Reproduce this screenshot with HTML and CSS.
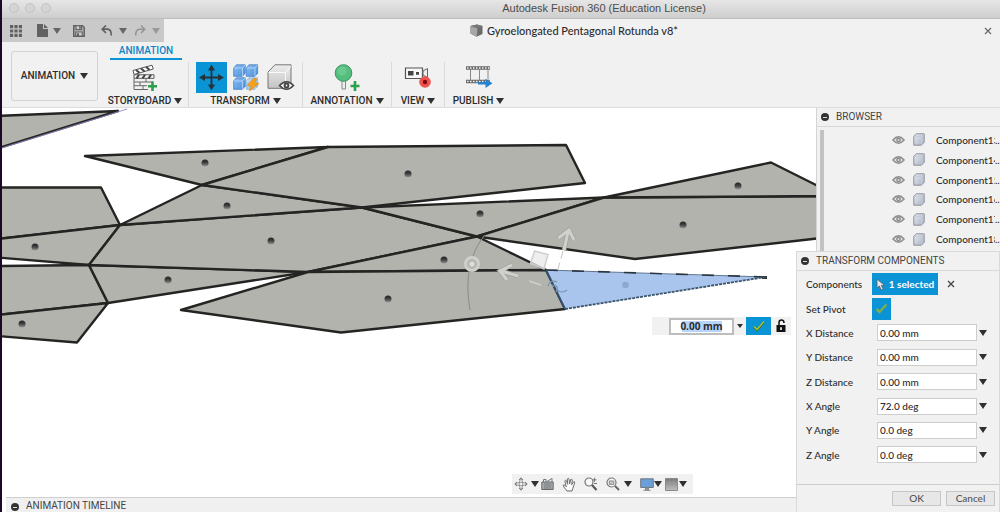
FILE: index.html
```
<!DOCTYPE html>
<html lang="en">
<head>
<meta charset="utf-8">
<title>Autodesk Fusion 360 (Education License)</title>
<link rel="stylesheet" href="styles.css">
</head>
<body>
<svg class="defs" aria-hidden="true">
  <defs>
    <linearGradient id="cubeFace" x1="0" y1="0" x2="1" y2="1"><stop offset="0" stop-color="#e6eaf1"/><stop offset="1" stop-color="#aab2c2"/></linearGradient>
    <linearGradient id="blueFace" x1="0" y1="0" x2="1" y2="1"><stop offset="0" stop-color="#8cc0f4"/><stop offset="1" stop-color="#4b8edb"/></linearGradient>
    <linearGradient id="grayFace" x1="0" y1="0" x2="0" y2="1"><stop offset="0" stop-color="#ececec"/><stop offset="1" stop-color="#c4c4c4"/></linearGradient>
    <linearGradient id="shade" x1="0" y1="0" x2="0" y2="1"><stop offset="0" stop-color="#777"/><stop offset="1" stop-color="#c0c0c0"/></linearGradient>
    <linearGradient id="node" x1="0" y1="0" x2="0" y2="1"><stop offset="0" stop-color="#222"/><stop offset="0.5" stop-color="#444"/><stop offset="1" stop-color="#999"/></linearGradient>
    <symbol id="eye" viewBox="0 0 14 10"><path d="M1 5Q7-2 13 5Q7 12 1 5Z" fill="#e2e2e2" stroke="#8c8c8c" stroke-width="1.5"/><circle cx="7" cy="5" r="2.6" fill="#8c8c8c"/><circle cx="7" cy="5" r="1" fill="#ddd"/></symbol>
    <symbol id="cube" viewBox="0 0 12 13"><path d="M.8 3.3L3.5.8H11.2V9.2L8.5 12.2H.8Z" fill="url(#cubeFace)" stroke="#8d929c"/><path d="M1 3.4H8.6V12M8.6 3.4L11 1" fill="none" stroke="#c3c8d2" stroke-width=".8"/></symbol>
    <symbol id="bluecube" viewBox="0 0 13 13"><path d="M.7 4L3.4.8H12.2V9.3L9.4 12.3H.7Z" fill="url(#blueFace)" stroke="#3f7cc0" stroke-width=".8"/><path d="M.9 4H9.4L12 1M9.4 4V12" fill="none" stroke="#b4d8fb" stroke-width=".9"/></symbol>
  </defs>
</svg>
<div class="app">
  <header class="titlebar">
    <div class="lights"><i></i><i></i><i></i></div>
    <h1>Autodesk Fusion 360 (Education License)</h1>
  </header>

  <div class="tabs">
    <div class="quick">
      <button class="ib grid" aria-label="Data panel"><svg width="12" height="12"><path d="M0 0h3.2v3.2H0zM4.4 0h3.2v3.2H4.4zM8.8 0H12v3.2H8.8zM0 4.4h3.2v3.2H0zM4.4 4.4h3.2v3.2H4.4zM8.8 4.4H12v3.2H8.8zM0 8.8h3.2V12H0zM4.4 8.8h3.2V12H4.4zM8.8 8.8H12V12H8.8z" fill="#626262"/></svg></button>
      <button class="ib file" aria-label="File"><svg width="12" height="13"><path d="M0 0H6V5H11V13H0Z" fill="#626262"/><path d="M7 0L11 4H7Z" fill="#626262"/></svg><i class="caret dim"></i></button>
      <button class="ib save" aria-label="Save"><svg width="12" height="12"><path d="M.7.7H9.5L11.3 2.5V11.3H.7Z" fill="#aaa" stroke="#626262" stroke-width="1.4"/><path d="M3 .8H8.5V4.5H3ZM2.8 7H9.2V11H2.8Z" fill="#d0d0d0" stroke="#626262" stroke-width="1.1"/><path d="M6.2 1h1.5v2.8H6.2zM4 8.3h2v2.7H4z" fill="#626262"/></svg></button>
      <button class="ib undo" aria-label="Undo"><svg width="12" height="12"><path d="M1 4.2H6.5Q10.5 4.5 10.3 10.5" fill="none" stroke="#626262" stroke-width="1.7"/><path d="M5 .5L1.2 4.2L5 8" fill="none" stroke="#626262" stroke-width="1.7"/></svg><i class="caret dim"></i></button>
      <button class="ib redo" aria-label="Redo"><svg width="12" height="12"><path d="M11 4.2H5.5Q1.5 4.5 1.7 10.5" fill="none" stroke="#949494" stroke-width="1.5"/><path d="M7 .5L10.8 4.2L7 8" fill="none" stroke="#949494" stroke-width="1.5"/></svg><i class="caret pale"></i></button>
    </div>
    <div class="doc">
      <span class="docname"><svg width="13" height="13"><path d="M.5 2L7 .4L12.5 2V10L6.5 12.8L.5 9.5Z" fill="#6b6b6b"/><path d="M.5 2L7.5 4.2L6.8 12.6L.5 9.5Z" fill="#a6a6a6"/><path d="M.5 2L7 .4L12.5 2L7.5 4.2Z" fill="#777"/></svg>Gyroelongated Pentagonal Rotunda v8*</span>
      <button class="ib close" aria-label="Close document"><svg width="8" height="8"><path d="M1 1L7 7M7 1L1 7" stroke="#6c6c6c" stroke-width="1.3"/></svg></button>
    </div>
  </div>

  <div class="ribbon">
    <button class="mode">ANIMATION<i class="caret"></i></button>
    <div class="toolarea">
      <button class="modetab">ANIMATION</button>
      <div class="groups">
        <div class="group g-story">
          <div class="icons"><button class="ib" aria-label="New storyboard"><svg width="28" height="28"><path d="M2 6.5L21 1.2L22.3 5L3 10.5Z" fill="#fff" stroke="#555"/><path d="M5 6L8.5 8.8M10 4.5L13.5 7.3M15 3L18.5 5.8" stroke="#444" stroke-width="2"/><path d="M3 10.8H23V14.3H3Z" fill="#fff" stroke="#555"/><path d="M8 10.8L5.5 14.3M14 10.8L11.5 14.3M20 10.8L17.5 14.3" stroke="#444" stroke-width="2"/><path d="M3 14.5V25.5H17M3 18H22M3 21.7H16M9 18V21.5M15 14.5V18M12 22V25" fill="none" stroke="#666"/><path d="M21.500 17.500V27M17 22.200H26" stroke="#2ba04a" stroke-width="2.6"/></svg></button></div>
          <button class="label">STORYBOARD<i class="caret"></i></button>
        </div>
        <div class="group g-transform">
          <div class="icons">
            <button class="ib active" aria-label="Transform components"><svg width="31" height="31"><path d="M15.500 6V25M6 15.500H25" stroke="#263238" stroke-width="1.800"/><path d="M15.500 2.500L19 8.500H12ZM15.500 28.500L19 22.500H12ZM3 15.500L9 12V19ZM28 15.500L22 12V19Z" fill="#263238"/></svg></button>
            <button class="ib" aria-label="Auto explode"><svg width="28" height="28"><use href="#bluecube" x="0" y="0" width="13" height="13"/><use href="#bluecube" x="12.500" y="0" width="13" height="13"/><use href="#bluecube" x="0" y="13" width="13" height="13"/><use href="#bluecube" x="12.500" y="13" width="13" height="13" opacity=".55"/><path d="M20.500 14.500L14 21.500L18.200 22L16.500 27L26 19.500L21.500 18.800L24 15Z" fill="#f6a21a" stroke="#d98a10" stroke-width=".6"/></svg></button>
            <button class="ib" aria-label="Show or hide"><svg width="28" height="28"><path d="M1 8L8 .8H24V19L19 24.300H1Z" fill="url(#grayFace)" stroke="#777"/><path d="M1.500 8.500H18.500V24M18.500 8.500L24 2" fill="none" stroke="#f8f8f8"/><path d="M12.500 21.500Q19.500 14 26.500 21.500Q19.500 29 12.500 21.500Z" fill="#fff" stroke="#444" stroke-width="1.500"/><circle cx="19.500" cy="21.500" r="2.900" fill="#444"/><circle cx="19.500" cy="21.500" r=".9" fill="#fff"/></svg></button>
          </div>
          <button class="label">TRANSFORM<i class="caret"></i></button>
        </div>
        <div class="group g-annot">
          <div class="icons"><button class="ib" aria-label="Create callout"><svg width="26" height="28"><path d="M8 16H11.500V25H8Z" fill="#eee" stroke="#888"/><circle cx="9.500" cy="9" r="8.300" fill="#55bd7e" stroke="#38955d"/><circle cx="8" cy="7" r="4.500" fill="#76d099" opacity=".6"/><path d="M21 17V27M16.500 22H25.500" stroke="#2ba04a" stroke-width="2.600"/></svg></button></div>
          <button class="label">ANNOTATION<i class="caret"></i></button>
        </div>
        <div class="group g-view">
          <div class="icons"><button class="ib" aria-label="View"><svg width="28" height="26"><path d="M1.500 3H18.500V13.500H1.500Z" fill="#f8f8f8" stroke="#555" stroke-width="1.200"/><path d="M4 6H9.500V10.500H4ZM12 7H15V9.800H12Z" fill="#444"/><path d="M19 6L23.500 3.500V12.500L19 10Z" fill="#eee" stroke="#666"/><circle cx="21" cy="17" r="5.800" fill="#ee5350"/><circle cx="21" cy="17" r="2.200" fill="#7c0a10"/></svg></button></div>
          <button class="label">VIEW<i class="caret"></i></button>
        </div>
        <div class="group g-publish">
          <div class="icons"><button class="ib" aria-label="Publish video"><svg width="28" height="26"><path d="M1 3H25M1 16.500H25" stroke="#696969" stroke-width="3.600"/><path d="M2 3H25M2 16.500H25" stroke="#f4f4f4" stroke-width="1.500" stroke-dasharray="1.500 1.500"/><path d="M5.500 5V15M14.500 5V15M23 5V14" stroke="#888"/><path d="M13 17H20.500V13.800L27.500 18.300L20.500 23V19.500H13Z" fill="#2582d0"/></svg></button></div>
          <button class="label">PUBLISH<i class="caret"></i></button>
        </div>
      </div>
    </div>
  </div>

  <main class="workspace">
    <svg class="model" viewBox="2 108 998 389" preserveAspectRatio="xMinYMin slice" role="img" aria-label="Unfolded model faces">
      <g class="face">
        <path d="M-3 116L118 111L-3 148.500Z"/>
        <path d="M-3 187.500H101L120 225L-3 239Z"/>
        <path d="M-3 239L120 225L89 265L-3 257.500Z"/>
        <path d="M-3 266L89 265L108 303L-3 315Z"/>
        <path d="M-3 315L108 303L77 342.500L-3 336Z"/>
        <path d="M89 265L308 272L108 303Z"/>
        <path d="M120 225L362 207.500L477 236.500L308 272L89 265Z"/>
        <path d="M85 156L328 147L202 185Z"/>
        <path d="M202 185L362 207.500L120 225Z"/>
        <path d="M328 147L566 145L585 183L362 207.500L202 185Z"/>
        <path d="M362 207.500L604 197.500L477 236.500Z"/>
        <path d="M308 272L477 236.500L546 270Z"/>
        <path d="M308 272L546 270L565 309L341 332.500L181 310Z"/>
        <path d="M604 197.500L830 196V237L635 259L477 236.500Z"/>
        <path d="M604 197.500L771 162.500L830 192V196Z"/>
      </g>
      <path d="M2 148L127 109" stroke="#8d87c4" stroke-width="1.200" opacity=".8"/>
      <path d="M546 270L766 277L565 309Z" fill="#a9c5ed"/>
      <path d="M546 270L766 277" stroke="#5f7590"/>
      <path d="M546 270L766 277" stroke="#2b3540" stroke-width="1.600" stroke-dasharray="12 14"/>
      <path d="M762 277.500H767" stroke="#333" stroke-width="3"/>
      <path d="M546 270L565 309" stroke="#34506e" stroke-width="2"/>
      <path d="M565 309L766 277" stroke="#3c566e" stroke-width="1.800" stroke-dasharray="3 1"/>
      <g fill="url(#node)">
        <circle cx="205" cy="163" r="3.500"/><circle cx="227" cy="206" r="3.500"/><circle cx="271" cy="241" r="3.500"/><circle cx="168" cy="280" r="3.500"/><circle cx="35" cy="247" r="3.500"/><circle cx="22" cy="324" r="3.500"/><circle cx="408" cy="174" r="3.500"/><circle cx="480" cy="214" r="3.500"/><circle cx="444" cy="260" r="3.500"/><circle cx="388" cy="299" r="3.500"/><circle cx="683" cy="225" r="3.500"/><circle cx="738" cy="186" r="3.500"/>
      </g>
      <circle cx="625.500" cy="285" r="3.300" fill="#8ba9d3"/>
      <g fill="none" stroke="#9a9a96">
        <path d="M484 236Q462 264 470 310" stroke="#8b8b87"/>
        <path d="M563 251L553 287" stroke-dasharray="8 4" stroke="#c4c4c4"/>
        <path d="M529 281L541 285" stroke="#d0d0cc" stroke-width="1.500"/>
        <path d="M548 286Q550 279 557 282M552 285Q560 285 556 292M557 290Q562 294 567 290" stroke="#7894ad" stroke-width="1.200"/>
      </g>
      <circle cx="472" cy="264" r="6.500" fill="#b5b5b1" stroke="#cfcfcc" stroke-width="3"/><circle cx="472" cy="264" r="2.600" fill="#dcdcd9"/>
      <path d="M534.500 251L548 254.500L544 269L530.500 263.500Z" fill="#e8e8e8" fill-opacity=".75" stroke="#cfcfcf" stroke-width="1.500"/>
      <g fill="none" stroke="#a2a29e" stroke-width="4.600"><path d="M564 250L568.500 230M558.500 238L569 230L574 240"/><path d="M518 276L501 271M512 265L500 271L507 280"/></g>
      <g fill="none" stroke="#d0d0cd" stroke-width="3"><path d="M564 250L568.500 230M558.500 238L569 230L574 240"/><path d="M518 276L501 271M512 265L500 271L507 280"/></g>
    </svg>

    <div class="floatbar">
      <input class="value" aria-label="Angle" value="0.00 mm">
      <i class="caret tiny"></i>
      <button class="ib accept" aria-label="Accept"><svg width="14" height="12"><path d="M2 7L5 10L12 2" fill="none" stroke="#3b702e" stroke-width="2.400"/><path d="M2 6.500L5 9.500L12 1.500" fill="none" stroke="#a7ce3a" stroke-width="1.300"/></svg></button>
      <button class="ib" aria-label="Lock"><svg width="12" height="14"><path d="M4 6.500V3.500Q4 1 6.500 1Q9 1 9 4" fill="none" stroke="#111" stroke-width="1.500"/><path d="M1.500 6H10.500V13H1.500Z" fill="#111"/><path d="M6 8.200V11" stroke="#fff" stroke-width="1.600"/></svg></button>
    </div>

    <div class="navbar">
      <button class="ib nav-orbit" aria-label="Orbit"><svg width="14" height="14"><path d="M7 1Q3.500 7 7 13Q10.500 7 7 1ZM1 7Q7 3.500 13 7Q7 10.500 1 7Z" fill="none" stroke="#888" stroke-width=".8"/><path d="M5 3L7 .8L9 3M5 11L7 13.200L9 11M3 5L.8 7L3 9M11 5L13.200 7L11 9" fill="none" stroke="#777"/></svg><i class="caret"></i></button>
      <button class="ib" aria-label="Look at"><svg width="13" height="14"><path d="M.8 5H12.200V12.500H.8Z" fill="#a9b0b6" stroke="#686868"/><path d="M2.500 5V2.500H5V5M6 4.500L11 1.500V5M2.800 7H10.500M2.800 9H10.500M2.800 11H10.500" fill="none" stroke="#777"/></svg></button>
      <button class="ib nav-pan" aria-label="Pan"><svg width="14" height="15"><path d="M5 14L1.200 9Q1 7.400 2.600 8L4.300 9.800L2.800 4Q3.300 2.600 4.400 3.700L5.700 7.300L5.300 2Q6 .5 7.100 2L7.600 7L8.700 2.500Q9.800 1.500 10.300 3L9.700 7.700L11.600 4.700Q12.800 4.400 12.700 5.800L10.800 11.500L10 14Z" fill="#fafafa" stroke="#6e6e6e"/></svg></button>
      <button class="ib nav-zoom" aria-label="Zoom"><svg width="14" height="14"><circle cx="5" cy="5" r="4" fill="#f8f8f8" stroke="#777" stroke-width="1.200"/><path d="M8 8L12.500 13" stroke="#5a5a5a" stroke-width="2.200"/><path d="M10.500 .8V4.800M8.500 2.800H12.500M10 6.500H13" stroke="#777"/></svg></button>
      <button class="ib nav-fit" aria-label="Zoom window"><svg width="14" height="14"><circle cx="5.500" cy="5.500" r="4.500" fill="#f8f8f8" stroke="#777" stroke-width="1.200"/><path d="M3.300 4H7.800V7.300H3.300Z" fill="#ccc" stroke="#888"/><path d="M9 9L13 13" stroke="#666" stroke-width="2"/></svg><i class="caret"></i></button>
      <button class="ib nav-display" aria-label="Display settings"><svg width="14" height="13"><path d="M.7 .8H13.300V9.500H.7Z" fill="#6b9fd8" stroke="#707880"/><path d="M5.500 10H8.500V12H5.500ZM3.500 12.300H10.500" stroke="#8a8a8a" fill="#999"/></svg><i class="caret"></i></button>
      <button class="ib nav-grid" aria-label="Grid and snaps"><svg width="13" height="13"><path d="M.5 .5H12.500V12.500H.5Z" fill="url(#shade)" stroke="#8b8b8b"/><path d="M.5 4.500H12.500M.5 8.500H12.500M4.500 .5V12M8.500 .5V12" stroke="#aaa" stroke-width=".3"/></svg><i class="caret"></i></button>
    </div>

    <section class="timeline"><i class="minus"></i><h2>ANIMATION TIMELINE</h2></section>

    <aside class="dock">
      <section class="browser">
        <header class="phead"><i class="minus"></i><h2>BROWSER</h2></header>
        <ul class="tree">
          <li><svg class="eye"><use href="#eye"/></svg><svg class="cube"><use href="#cube"/></svg><span class="cname">Component13</span><span>..</span></li>
          <li><svg class="eye"><use href="#eye"/></svg><svg class="cube"><use href="#cube"/></svg><span class="cname">Component14</span><span>..</span></li>
          <li><svg class="eye"><use href="#eye"/></svg><svg class="cube"><use href="#cube"/></svg><span class="cname">Component15</span><span>..</span></li>
          <li><svg class="eye"><use href="#eye"/></svg><svg class="cube"><use href="#cube"/></svg><span class="cname">Component16</span><span>..</span></li>
          <li><svg class="eye"><use href="#eye"/></svg><svg class="cube"><use href="#cube"/></svg><span class="cname">Component17</span><span>..</span></li>
          <li><svg class="eye"><use href="#eye"/></svg><svg class="cube"><use href="#cube"/></svg><span class="cname">Component18</span><span>..</span></li>
        </ul>
      </section>
      <form class="transform">
        <header class="phead"><i class="minus"></i><h2>TRANSFORM COMPONENTS</h2></header>
        <div class="fields">
          <div class="row"><span class="lab">Components</span><button type="button" class="selected"><svg width="10" height="13"><path d="M1 1V10L3.300 8L5.300 12L7.200 11L5.300 7.500H8.500Z" fill="#e8e8e8" stroke="#5e6a74" stroke-width=".9"/></svg>1 selected</button><button type="button" class="ib clear" aria-label="Clear selection"><svg width="8" height="8"><path d="M1 1L7 7M7 1L1 7" stroke="#444" stroke-width="1.300"/></svg></button></div>
          <div class="row"><label class="lab" for="pivot">Set Pivot</label><button type="button" class="ib pivot" id="pivot" aria-label="Set Pivot"><svg width="13" height="11"><path d="M1.500 6L4.500 9L11.500 1.500" fill="none" stroke="#7cae4c" stroke-width="2.500"/></svg></button></div>
          <div class="row"><label class="lab" for="xd">X Distance</label><input id="xd" value="0.00 mm"><i class="caret"></i></div>
          <div class="row"><label class="lab" for="yd">Y Distance</label><input id="yd" value="0.00 mm"><i class="caret"></i></div>
          <div class="row"><label class="lab" for="zd">Z Distance</label><input id="zd" value="0.00 mm"><i class="caret"></i></div>
          <div class="row"><label class="lab" for="xa">X Angle</label><input id="xa" value="72.0 deg"><i class="caret"></i></div>
          <div class="row"><label class="lab" for="ya">Y Angle</label><input id="ya" value="0.0 deg"><i class="caret"></i></div>
          <div class="row"><label class="lab" for="za">Z Angle</label><input id="za" value="0.0 deg"><i class="caret"></i></div>
        </div>
        <footer class="actions"><button type="button">OK</button><button type="button">Cancel</button></footer>
      </form>
    </aside>
  </main>
</div>
</body>
</html>
```
FILE: styles.css
```
* { box-sizing: border-box; }
html, body { height: 100%; margin: 0; }
body { background: #1c0826; font: 500 10px/14px Lato, "Open Sans", sans-serif; color: #2c2c2c; overflow: hidden; }
button, input { font: inherit; color: inherit; margin: 0; }
button { padding: 0; border: 0; background: none; white-space: nowrap; }
h1, h2, ul { margin: 0; padding: 0; font: inherit; list-style: none; }
h2, .mode, .modetab, .label { font-family: Roboto, Lato, sans-serif; }
h2 { font-weight: 400; }
svg { display: block; flex: none; }
.defs { position: absolute; width: 0; height: 0; }
.ib { display: flex; align-items: center; justify-content: center; flex: none; }
.caret { display: block; flex: none; width: 0; height: 0; border: 4px solid transparent; border-top: 6px solid #303030; border-bottom: 0; }
.caret.dim { border-top-color: #666; }
.caret.pale { border-top-color: #999; }
.caret.tiny { border-width: 4px 3px 0; }

.app { display: flex; flex-direction: column; height: 100%; margin-left: 2px; background: #f1f1f1; }
.titlebar { display: grid; grid-template-columns: 206px 1fr; align-items: center; height: 19px; padding-bottom: 3px; background: linear-gradient(#e6e6e6, #cecece); border-bottom: 1px solid #bdbdbd; }
.titlebar h1 { text-align: center; font: 11px/14px "Liberation Sans", Arial, sans-serif; color: #4c4c4c; }
.lights { display: flex; gap: 6px; padding-left: 7px; }
.lights i { width: 10px; height: 10px; border: 1px solid #c2c2c2; border-radius: 50%; background: #d4d4d4; }

.tabs { display: flex; height: 23px; }
.quick { display: flex; align-items: center; width: 162px; padding-left: 8px; background: #c9c9c9; }
.quick .ib { justify-content: flex-start; gap: 4px; }
.grid { width: 27px; }
.file { width: 36px; }
.save { width: 28px; }
.quick .undo { width: 33px; gap: 6px; }
.quick .redo { gap: 6px; }
.doc { flex: 1; display: grid; grid-template-columns: 1fr 24px; align-items: center; padding-left: 8px; }
.docname { display: flex; align-items: center; justify-content: center; gap: 4px; font-size: 11px; }

.ribbon { display: flex; height: 66px; padding: 0 9px; border-bottom: 1px solid #dcdcdc; }
.mode { display: flex; align-items: center; justify-content: center; gap: 5px; width: 87px; height: 50px; margin-top: 9px; border: 1px solid #d0d4d6; border-radius: 3px; }
.toolarea { display: flex; flex-direction: column; margin-left: 12px; }
.modetab { align-self: flex-start; width: 72px; height: 18px; padding-top: 2px; border-bottom: 2px solid #0a94d6; color: #0a86c8; }
.groups { display: flex; padding-top: 2px; }
.group { display: flex; flex-direction: column; justify-content: space-between; align-items: center; height: 45px; border-left: 1px solid #dadada; }
.g-story { width: 78px; border: 0; padding-right: 8px; }
.g-transform { width: 114px; }
.g-annot { width: 89px; }
.g-view { width: 53px; }
.g-publish { width: 68px; }
.icons { display: flex; align-items: center; gap: 6px; height: 31px; }
.active { background: #0a94d6; }
.label { display: flex; align-items: center; gap: 3px; line-height: 12px; }

.workspace { position: relative; flex: 1; min-height: 0; display: flex; flex-direction: column; background: #fff; }
.model { flex: 1; min-height: 0; width: 100%; }
.face path { fill: #b2b3ad; stroke: #242422; stroke-width: 2.4; stroke-linejoin: round; }
.timeline { display: flex; align-items: flex-end; gap: 7px; height: 15px; margin-left: 4px; padding-left: 5px; background: #f0f0f0; border-top: 1px solid #cfcfcf; color: #444; }
.timeline h2 { line-height: 12px; white-space: nowrap; }
.timeline .minus { margin-bottom: 1px; }
.minus { display: flex; align-items: center; justify-content: center; flex: none; width: 8px; height: 8px; border-radius: 50%; background: #333; }
.minus::after { content: ""; width: 4px; height: 1px; background: #ddd; }

.floatbar { position: absolute; left: 650px; top: 209px; display: flex; align-items: center; height: 18px; padding: 0 4px 0 17px; background: #f1f1f1; }
.value { width: 65px; height: 17px; padding: 0; border: 2px solid #bdbdbd; background: #fff linear-gradient(#b5d5fb, #b5d5fb) center / 40px 11px no-repeat; text-align: center; font: 700 10px/12px "Open Sans", sans-serif; }
.floatbar .tiny { margin: 0 3px; }
.accept { width: 25px; height: 18px; margin-right: 4px; background: #0a94d6; }

.navbar { position: absolute; left: 510px; top: 366px; display: flex; align-items: center; height: 20px; padding: 0 6px 0 2px; background: #f1f1f1; }
.navbar .ib { margin-right: 8px; }
.navbar .nav-orbit { gap: 3px; margin-right: 2px; }
.navbar .nav-fit { gap: 4px; }
.navbar .nav-display { margin-right: 3px; }
.navbar .nav-grid { gap: 1px; margin-right: 0; }

.dock { position: absolute; inset: 0 0 0 auto; width: 204px; display: flex; flex-direction: column; }
.phead { display: flex; align-items: center; flex: none; gap: 7px; height: 19px; padding-left: 4px; border-bottom: 1px solid #d9d9d9; color: #444; }
.browser { flex: 1; min-height: 0; align-self: flex-end; width: 184px; display: flex; flex-direction: column; background: #f1f1f1; border-left: 1px solid #d4d4d4; }
.tree { flex: 1; display: grid; grid-auto-rows: 1fr; margin: 3px 0 0 3px; padding-bottom: 2px; border-left: 4px solid #c2c2c2; }
.tree li { display: flex; align-items: center; padding-left: 68px; white-space: nowrap; }
.eye { width: 13px; height: 10px; margin-right: 8px; }
.cube { width: 12px; height: 13px; margin-right: 11px; }
.cname { flex: none; width: 59px; overflow: hidden; }

.transform { flex: none; display: flex; flex-direction: column; height: 261px; background: #f1f1f1; border: 1px solid #d9d9d9; border-bottom: 0; }
.fields { flex: 1; display: grid; grid-template-columns: minmax(0, 1fr); grid-auto-rows: 1fr; padding: 1px 12px 17px 9px; }
.row { display: flex; align-items: center; min-height: 0; }
.lab { width: 66px; flex: none; }
.row input { flex: 1; min-width: 0; height: 17px; margin: 0 2px 0 5px; padding: 0 2px; border: 1px solid #cdcdcd; background: #fff; }
.selected { display: flex; align-items: center; justify-content: center; gap: 3px; width: 66px; height: 22px; background: #0a94d6; color: #fff; font-weight: 700; }
.clear { margin-left: 9px; }
.pivot { width: 19px; height: 22px; background: #0a94d6; }
.actions { display: flex; align-items: center; justify-content: flex-end; gap: 5px; height: 28px; padding-right: 4px; border-top: 1px solid #cdcdcd; }
.actions button { width: 49px; height: 15px; border: 1px solid #c6c6c6; background: #e7e7e7; color: #555; line-height: 13px; }
```
